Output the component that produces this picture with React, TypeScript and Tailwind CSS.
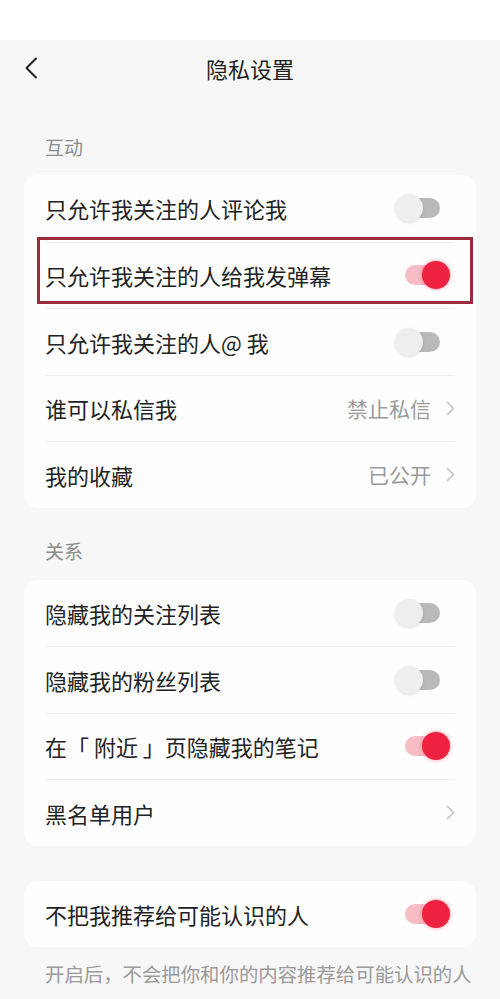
import React from "react"

type Row = {
    label: string
    toggle?: boolean
    value?: string
}

const interaction: Row[] = [
    {label: "只允许我关注的人评论我", toggle: false},
    {label: "只允许我关注的人给我发弹幕", toggle: true},
    {label: "只允许我关注的人@ 我", toggle: false},
    {label: "谁可以私信我", value: "禁止私信"},
    {label: "我的收藏", value: "已公开"},
]

const relation: Row[] = [
    {label: "隐藏我的关注列表", toggle: false},
    {label: "隐藏我的粉丝列表", toggle: false},
    {label: "在「 附近 」页隐藏我的笔记", toggle: true},
    {label: "黑名单用户", value: ""},
]

const Toggle = ({on}: {on: boolean}) => (
    <div className="relative w-[55px] h-[28px] mr-[5px] shrink-0">
        <div
            className={
                "absolute left-[10px] right-[10px] top-[4px] h-[20px] rounded-full " +
                (on ? "bg-[#f8bcc7]" : "bg-[#b9b9b9]")
            }
        />
        {on ? (
            <div className="absolute right-0 top-0 w-[28px] h-[28px] rounded-full bg-[#ef2141] shadow-[0_0_4px_rgba(239,33,65,0.45)]" />
        ) : (
            <div className="absolute left-0 top-0 w-[28px] h-[28px] rounded-full bg-[#eeeeee] shadow-[0_1px_3px_rgba(0,0,0,0.12)]" />
        )}
    </div>
)

const Chevron = () => (
    <svg width="9" height="15" viewBox="0 0 9 15" className="shrink-0">
        <path d="M1.5 1.5 L7.5 7.5 L1.5 13.5" fill="none" stroke="#c2c2c2" strokeWidth="1.6" strokeLinecap="round" strokeLinejoin="round" />
    </svg>
)

const SettingRow = ({row, first}: {row: Row; first: boolean}) => (
    <div className="h-[66.5px] px-[21px]">
        <div className={"h-full flex items-center justify-between " + (first ? "" : "border-t border-[#efefef]")}>
            <span className="text-[22px] text-[#222222] leading-none">{row.label}</span>
            {row.toggle !== undefined ? (
                <Toggle on={row.toggle} />
            ) : (
                <div className="flex items-center gap-[15px]">
                    {row.value && <span className="text-[21px] text-[#9b9b9b] leading-none">{row.value}</span>}
                    <Chevron />
                </div>
            )}
        </div>
    </div>
)

const Card = ({rows}: {rows: Row[]}) => (
    <div className="mx-6 bg-[#fefefe] rounded-[14px]">
        {rows.map((r, i) => (
            <SettingRow key={r.label} row={r} first={i === 0} />
        ))}
    </div>
)

const SectionLabel = ({text}: {text: string}) => (
    <div className="h-[54px] pb-[4px] flex items-center px-[45px] text-[19px] text-[#8c8c8c] leading-none">{text}</div>
)

export default function App() {
    return (
        <div
            className="w-[500px] h-[999px] overflow-hidden bg-[#f7f7f7]"
            style={{fontFamily: '"Noto Sans CJK SC", "Noto Sans", sans-serif'}}
        >
            <div className="h-[40px] bg-white" />
            <div className="relative h-[56px] flex items-center justify-center">
                <svg width="14" height="22" viewBox="0 0 14 22" className="absolute left-[24px] top-[17px]">
                    <path d="M12 1.5 L2.5 11 L12 20.5" fill="none" stroke="#222" strokeWidth="2" strokeLinecap="round" strokeLinejoin="round" />
                </svg>
                <span className="text-[22px] text-[#1e1e1e] leading-none">隐私设置</span>
            </div>

            <div className="mt-[25px]">
                <SectionLabel text="互动" />
            </div>
            <div className="relative">
                <Card rows={interaction} />
                <div className="absolute left-[37px] w-[436px] top-[62px] h-[67px] border-[3px] border-[#9d2b3b] pointer-events-none" />
            </div>

            <div className="mt-[18px]">
                <SectionLabel text="关系" />
            </div>
            <Card rows={relation} />

            <div className="mt-[35px]">
                <Card rows={[{label: "不把我推荐给可能认识的人", toggle: true}]} />
            </div>
            <div className="px-[45px] pt-[17px] text-[19.4px] text-[#9a9a9a] leading-none whitespace-nowrap">
                开启后，不会把你和你的内容推荐给可能认识的人
            </div>
        </div>
    )
}
